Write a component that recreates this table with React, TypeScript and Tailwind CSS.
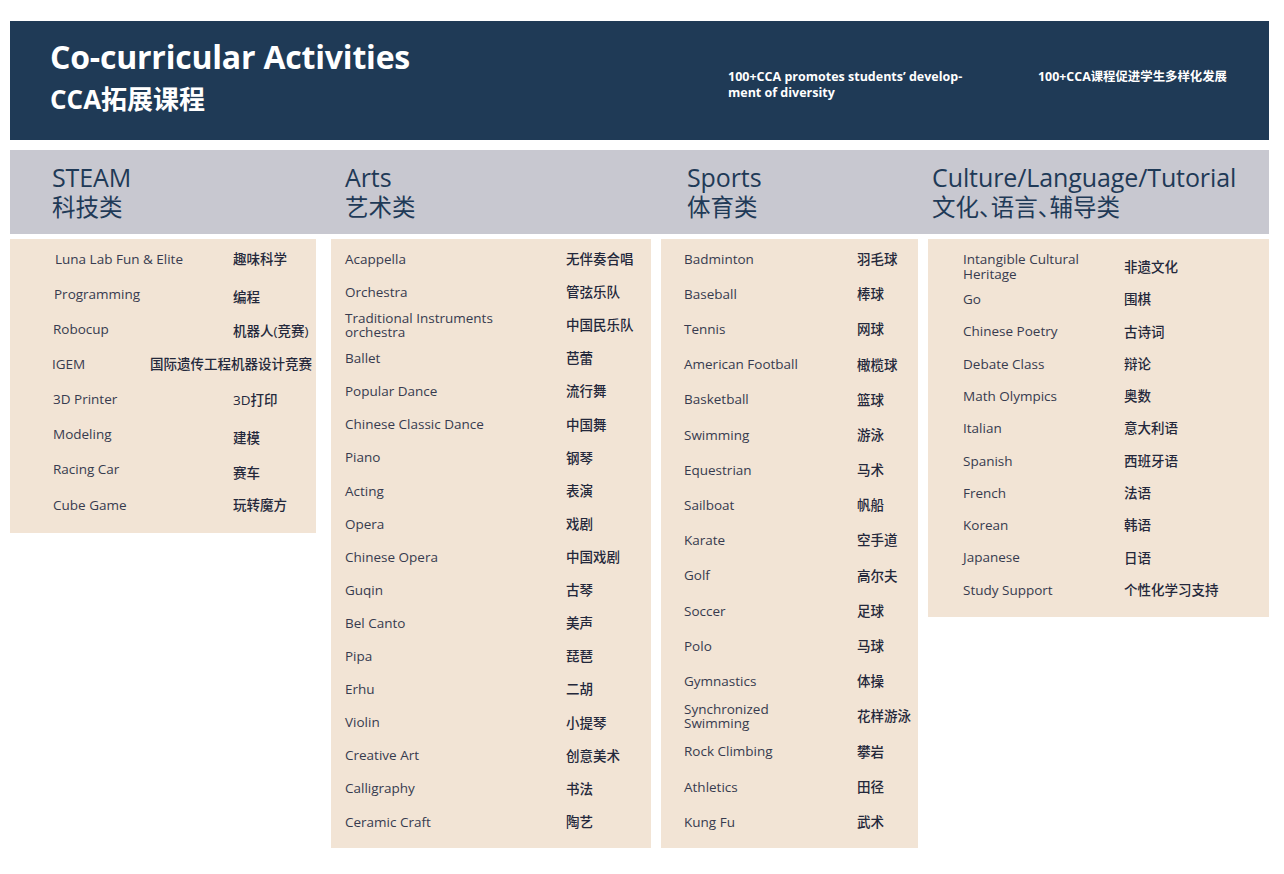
import React from "react";

type Row = { en: string; zh: string; enW?: number; dx?: number; dy?: number };

type Card = {
  width: number;
  height: number;
  pt: number;
  rowH: number;
  enLeft: number;
  enW: number;
  rows: Row[];
};

const FONT = "font-['Open_Sans','Noto_Sans_CJK_SC',sans-serif]";

const steam: Card = {
  width: 306,
  height: 294,
  pt: 2.4,
  rowH: 35.14,
  enLeft: 43,
  enW: 180,
  rows: [
    { en: "Luna Lab Fun & Elite", zh: "趣味科学", dx: 2 },
    { en: "Programming", zh: "编程", dx: 1, dy: 3 },
    { en: "Robocup", zh: "机器人(竞赛)", dy: 2 },
    { en: "IGEM", zh: "国际遗传工程机器设计竞赛", enW: 97, dx: -1 },
    { en: "3D Printer", zh: "3D打印", dy: 1 },
    { en: "Modeling", zh: "建模", dy: 3 },
    { en: "Racing Car", zh: "赛车", dy: 3 },
    { en: "Cube Game", zh: "玩转魔方" },
  ],
};

const arts: Card = {
  width: 320,
  height: 609,
  pt: 3.44,
  rowH: 33.12,
  enLeft: 14,
  enW: 221,
  rows: [
    { en: "Acappella", zh: "无伴奏合唱" },
    { en: "Orchestra", zh: "管弦乐队" },
    { en: "Traditional Instruments\norchestra", zh: "中国民乐队" },
    { en: "Ballet", zh: "芭蕾" },
    { en: "Popular Dance", zh: "流行舞" },
    { en: "Chinese Classic Dance", zh: "中国舞" },
    { en: "Piano", zh: "钢琴" },
    { en: "Acting", zh: "表演" },
    { en: "Opera", zh: "戏剧" },
    { en: "Chinese Opera", zh: "中国戏剧" },
    { en: "Guqin", zh: "古琴" },
    { en: "Bel Canto", zh: "美声" },
    { en: "Pipa", zh: "琵琶" },
    { en: "Erhu", zh: "二胡" },
    { en: "Violin", zh: "小提琴" },
    { en: "Creative Art", zh: "创意美术" },
    { en: "Calligraphy", zh: "书法" },
    { en: "Ceramic Craft", zh: "陶艺" },
  ],
};

const sports: Card = {
  width: 257,
  height: 609,
  pt: 2.4,
  rowH: 35.19,
  enLeft: 23,
  enW: 173,
  rows: [
    { en: "Badminton", zh: "羽毛球" },
    { en: "Baseball", zh: "棒球" },
    { en: "Tennis", zh: "网球" },
    { en: "American Football", zh: "橄榄球" },
    { en: "Basketball", zh: "篮球" },
    { en: "Swimming", zh: "游泳" },
    { en: "Equestrian", zh: "马术" },
    { en: "Sailboat", zh: "帆船" },
    { en: "Karate", zh: "空手道" },
    { en: "Golf", zh: "高尔夫" },
    { en: "Soccer", zh: "足球" },
    { en: "Polo", zh: "马球" },
    { en: "Gymnastics", zh: "体操" },
    { en: "Synchronized\nSwimming", zh: "花样游泳" },
    { en: "Rock Climbing", zh: "攀岩" },
    { en: "Athletics", zh: "田径" },
    { en: "Kung Fu", zh: "武术" },
  ],
};

const culture: Card = {
  width: 341,
  height: 378,
  pt: 11.85,
  rowH: 32.3,
  enLeft: 35,
  enW: 161,
  rows: [
    { en: "Intangible Cultural\nHeritage", zh: "非遗文化" },
    { en: "Go", zh: "围棋" },
    { en: "Chinese Poetry", zh: "古诗词" },
    { en: "Debate Class", zh: "辩论" },
    { en: "Math Olympics", zh: "奥数" },
    { en: "Italian", zh: "意大利语" },
    { en: "Spanish", zh: "西班牙语" },
    { en: "French", zh: "法语" },
    { en: "Korean", zh: "韩语" },
    { en: "Japanese", zh: "日语" },
    { en: "Study Support", zh: "个性化学习支持" },
  ],
};

function CardView({ card }: { card: Card }) {
  return (
    <div
      className="bg-[#f2e4d5] shrink-0 flex flex-col"
      style={{ width: card.width, height: card.height, paddingTop: card.pt }}
    >
      {card.rows.map((r, i) => (
        <div
          key={i}
          className="flex items-center shrink-0"
          style={{ height: card.rowH, paddingLeft: card.enLeft + (r.dx ?? 0) }}
        >
          <div
            className="shrink-0 whitespace-pre-line text-[13.5px] leading-[14.5px] font-medium text-[#373b4f]"
            style={{ width: (r.enW ?? card.enW) - (r.dx ?? 0) }}
          >
            {r.en}
          </div>
          <div
            className="whitespace-nowrap text-[13.5px] leading-[16px] font-medium text-[#24283b]"
            style={{ marginTop: (r.dy ?? 0) * 2 }}
          >
            {r.zh}
          </div>
        </div>
      ))}
    </div>
  );
}

const heads = [
  { en: "STEAM", zh: "科技类", w: 321, pl: 42 },
  { en: "Arts", zh: "艺术类", w: 330, pl: 14 },
  { en: "Sports", zh: "体育类", w: 267, pl: 26 },
  { en: "Culture/Language/Tutorial", zh: "文化、语言、辅导类", w: 341, pl: 4 },
];

export default function App() {
  return (
    <div className={`w-[1284px] h-[874px] bg-white pt-[21px] pl-[10px] ${FONT}`}>
      <div className="w-[1259px] h-[119px] bg-[#1f3a56] flex text-white">
        <div className="w-[718px] shrink-0 pl-[40px] pt-[16px]">
          <div className="text-[32px] leading-[40px] font-bold tracking-[-0.2px]">
            Co-curricular Activities
          </div>
          <div className="text-[26px] leading-[34px] font-bold mt-[5px]">CCA拓展课程</div>
        </div>
        <div className="w-[310px] shrink-0 pt-[48px] text-[12.5px] leading-[16px] font-bold">
          100+CCA promotes students’ develop-
          <br />
          ment of diversity
        </div>
        <div className="pt-[48px] text-[12.4px] leading-[16px] font-bold whitespace-nowrap">
          100+CCA课程促进学生多样化发展
        </div>
      </div>

      <div className="w-[1259px] h-[84px] mt-[10px] bg-[#c8c8d0] flex text-[#1f3a57]">
        {heads.map((h) => (
          <div
            key={h.en}
            className="shrink-0 pt-[12px]"
            style={{ width: h.w, paddingLeft: h.pl }}
          >
            <div className="text-[25px] leading-[30px] whitespace-nowrap tracking-[-0.1px]">{h.en}</div>
            <div className="text-[23.5px] leading-[30px] whitespace-nowrap [font-feature-settings:'halt']">
              {h.zh}
            </div>
          </div>
        ))}
      </div>

      <div className="flex items-start mt-[5px]">
        <CardView card={steam} />
        <div className="w-[15px] shrink-0" />
        <CardView card={arts} />
        <div className="w-[10px] shrink-0" />
        <CardView card={sports} />
        <div className="w-[10px] shrink-0" />
        <CardView card={culture} />
      </div>
    </div>
  );
}
